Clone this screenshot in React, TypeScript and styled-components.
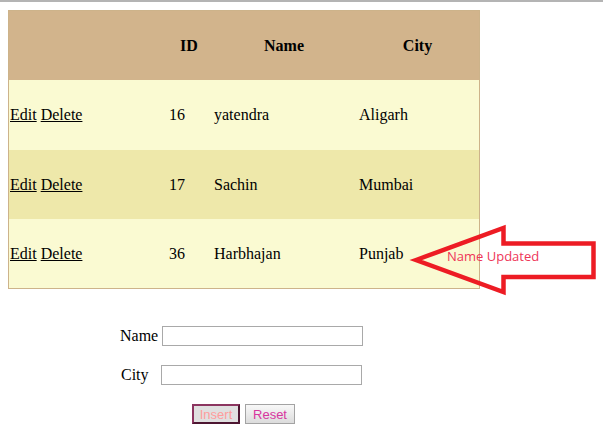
import React from 'react'
import styled, { createGlobalStyle } from 'styled-components'

interface Person {
  id: number
  name: string
  city: string
}

const people: Person[] = [
  { id: 16, name: 'yatendra', city: 'Aligarh' },
  { id: 17, name: 'Sachin', city: 'Mumbai' },
  { id: 36, name: 'Harbhajan', city: 'Punjab' },
]

const GlobalStyle = createGlobalStyle`
  html, body {
    margin: 0;
    padding: 0;
    background: #ffffff;
  }
  body {
    font-family: "Liberation Serif", "Times New Roman", serif;
    font-size: 16px;
    color: #000;
  }
`

const TopRule = styled.div`
  height: 2px;
  background: #b4b4b4;
`

const Page = styled.div`
  position: relative;
  padding: 8px 0 0 8px;
`

const Grid = styled.table`
  width: 472px;
  table-layout: fixed;
  border-collapse: separate;
  border-spacing: 0;
  border: 1px solid #cdb38a;
  font-size: 16px;
`

const HeadCell = styled.th`
  height: 69px;
  padding: 0;
  background: #d2b48c;
  font-weight: bold;
  text-align: center;
  vertical-align: middle;
`

const Row = styled.tr<{ $alt?: boolean }>`
  background: ${(p) => (p.$alt ? '#eee8aa' : '#fafad2')};
`

const Cell = styled.td<{ $pad?: number; $tall?: boolean }>`
  height: ${(p) => (p.$tall ? '70px' : '69px')};
  padding: 0 0 0 ${(p) => p.$pad ?? 3}px;
  vertical-align: middle;
  white-space: nowrap;
`

const ActionLink = styled.a`
  color: #000;
  text-decoration: underline;
  cursor: pointer;
`

const Form = styled.div`
  display: grid;
  grid-template-columns: 41px 202px;
  row-gap: 19px;
  align-items: center;
  margin: 37px 0 0 112px;
`

const Label = styled.label<{ $indent?: number }>`
  padding-left: ${(p) => p.$indent ?? 0}px;
  white-space: nowrap;
`

const TextInput = styled.input<{ $shift?: number }>`
  box-sizing: border-box;
  width: 201px;
  height: 20px;
  margin: 0 0 0 ${(p) => p.$shift ?? 0}px;
  border: 1px solid #a9a9a9;
  padding: 1px 3px;
  background: #fff;
`

const Buttons = styled.div`
  grid-column: 1 / span 2;
  display: flex;
  gap: 5px;
  padding-left: 72px;
`

const Button = styled.button<{ $primary?: boolean }>`
  box-sizing: border-box;
  height: 20px;
  width: ${(p) => (p.$primary ? '48px' : '50px')};
  margin: 0;
  padding: 0;
  font-family: "Liberation Sans", Arial, sans-serif;
  font-size: 13px;
  color: ${(p) => (p.$primary ? '#ff9c9c' : '#d8379f')};
  background: ${(p) =>
    p.$primary ? '#e0e0e0' : 'linear-gradient(#f8f8f8, #dcdcdc)'};
  border: ${(p) => (p.$primary ? '2px solid' : '1px solid #a3a3a3')};
  border-color: ${(p) =>
    p.$primary ? '#8c3560 #4d1631 #4d1631 #8c3560' : '#a3a3a3'};
  border-radius: 0;
  cursor: pointer;
`

const Callout = styled.svg`
  position: absolute;
  left: 400px;
  top: 218px;
  overflow: visible;
`

const CalloutText = styled.span`
  position: absolute;
  left: 447px;
  top: 248px;
  font-family: "Open Sans", "Liberation Sans", sans-serif;
  font-size: 13px;
  line-height: 1;
  color: #ee3558;
  white-space: nowrap;
`

export default function App() {
  return (
    <>
      <GlobalStyle />
      <TopRule />
      <Page>
        <Grid>
          <colgroup>
            <col style={{ width: 157 }} />
            <col style={{ width: 46 }} />
            <col style={{ width: 144 }} />
            <col style={{ width: 123 }} />
          </colgroup>
          <thead>
            <tr>
              <HeadCell />
              <HeadCell>ID</HeadCell>
              <HeadCell>Name</HeadCell>
              <HeadCell>City</HeadCell>
            </tr>
          </thead>
          <tbody>
            {people.map((person, index) => (
              <Row key={person.id} $alt={index % 2 === 1}>
                <Cell $pad={1} $tall={index === 0}>
                  <ActionLink>Edit</ActionLink> <ActionLink>Delete</ActionLink>
                </Cell>
                <Cell>{person.id}</Cell>
                <Cell $pad={2}>{person.name}</Cell>
                <Cell>{person.city}</Cell>
              </Row>
            ))}
          </tbody>
        </Grid>

        <Form>
          <Label>Name</Label>
          <TextInput type="text" $shift={1} />
          <Label $indent={1}>City</Label>
          <TextInput type="text" />
          <Buttons>
            <Button $primary>Insert</Button>
            <Button>Reset</Button>
          </Buttons>
        </Form>

        <Callout width="200" height="78" viewBox="0 0 200 78">
          <polygon
            points="16,40 103.5,8 103.5,23.5 193.5,23.5 193.5,57 103.5,57 103.5,72"
            fill="none"
            stroke="#ed1c24"
            strokeWidth="4.5"
            strokeLinejoin="miter"
            strokeMiterlimit="10"
          />
        </Callout>
        <CalloutText>Name Updated</CalloutText>
      </Page>
    </>
  )
}
